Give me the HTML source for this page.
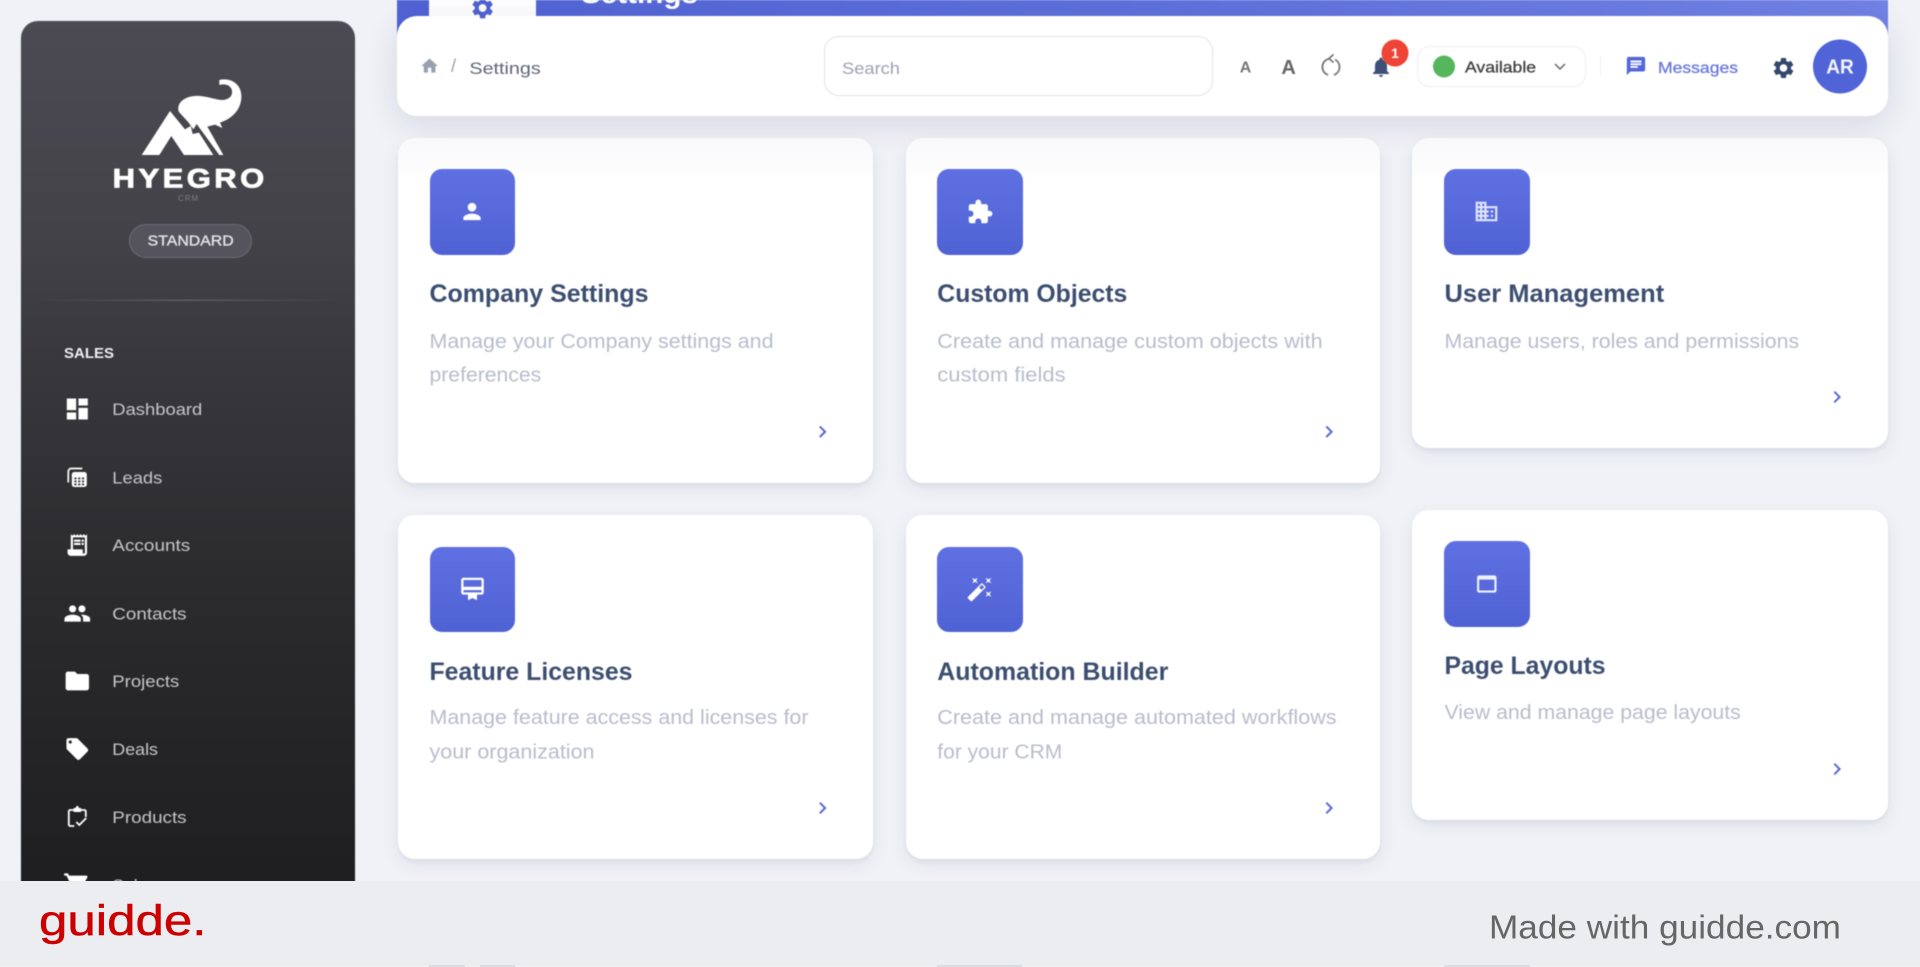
<!DOCTYPE html>
<html lang="en">
<head>
<meta charset="utf-8">
<title>Settings - Hyegro CRM</title>
<style>
html,body{margin:0;padding:0;width:1920px;height:966px;overflow:hidden;background:#f0f2f7;font-family:"Liberation Sans",sans-serif}
#stage{position:absolute;left:0;top:0;width:1920px;height:966px;overflow:hidden;filter:blur(.45px)}
.box{position:absolute;box-sizing:border-box}
#side{left:21px;top:21px;width:334px;height:880px;border-radius:17px 17px 0 0;background:linear-gradient(180deg,#4c4b54 0,#434248 25%,#39383d 38%,#2c2c2f 62%,#1e1e20 100%);box-shadow:0 0 0 1px rgba(150,150,160,.08)}
#band{left:397px;top:0;width:1491px;height:40px;background:linear-gradient(90deg,#5164d4 0,#5f71dc 50%,#7282e5 100%)}
#tab{left:429px;top:0;width:107px;height:20px;background:#fff}
#bar{left:397px;top:16px;width:1491px;height:100px;background:#fff;border-radius:20px;box-shadow:0 8px 34px rgba(25,35,70,.12)}
#search{left:824px;top:36px;width:389px;height:60px;border:1.5px solid #e1e3e9;border-radius:15px;background:#fff}
#avail{left:1417px;top:46px;width:169px;height:41px;border:1.5px solid #eceef2;border-radius:13px;background:#fff}
.card{position:absolute;background:#fff;border-radius:17px;box-shadow:0 3px 5px rgba(30,40,80,.06),0 6px 20px rgba(30,40,80,.07)}
.r1{background:linear-gradient(180deg,#f9f9fb 0,#fdfdfe 32px,#fff 42px)}
.ic{position:absolute;width:85.5px;height:85.5px;border-radius:12px;background:linear-gradient(180deg,#5f70e2 0,#4f62d4 100%)}
#main{position:absolute;left:0;top:0}
#foot{position:absolute;left:0;top:881px;width:1920px;height:85px;background:#ecedf0}
#foot i{position:absolute;top:84px;height:2px;background:#dcdee6}
text{font-family:"Liberation Sans",sans-serif}
.t{font-size:25px;font-weight:700;fill:#3c4e70}
.d{font-size:20.5px;fill:#b9bccc}
.m{font-size:17px;fill:#c6c6c9}
</style>
</head>
<body>
<div id="stage">
  <div class="box" id="side"></div>
  <div class="box" id="band"></div>
  <div class="box" id="tab"></div>
  <div class="box" id="bar"></div>
  <div class="box" id="search"></div>
  <div class="box" id="avail"></div>

  <div class="card r1" style="left:397.5px;top:137.5px;width:475.5px;height:345px"></div>
  <div class="card r1" style="left:905.5px;top:137.5px;width:474.5px;height:345px"></div>
  <div class="card r1" style="left:1412px;top:137.5px;width:476px;height:310.5px"></div>
  <div class="card" style="left:397.5px;top:514.5px;width:475.5px;height:344px"></div>
  <div class="card" style="left:905.5px;top:514.5px;width:474.5px;height:344px"></div>
  <div class="card" style="left:1412px;top:509.5px;width:476px;height:310.5px"></div>

  <div class="ic" style="left:429.5px;top:169px"></div>
  <div class="ic" style="left:937.3px;top:169px"></div>
  <div class="ic" style="left:1444px;top:169px"></div>
  <div class="ic" style="left:429.5px;top:546.5px"></div>
  <div class="ic" style="left:937.3px;top:546.5px"></div>
  <div class="ic" style="left:1444px;top:541px"></div>

  <svg id="main" width="1920" height="966" viewBox="0 0 1920 966" xmlns="http://www.w3.org/2000/svg">
    <!-- Logo -->
    <g transform="scale(.33333)" fill="#fff">
      <path d="M536 335C528 305 560 285 600 288C625 290 650 300 668 300C690 298 700 285 695 268C690 255 675 250 658 255L658 240C690 232 722 250 724 285C726 325 700 355 660 368L667 384L645 374L622 380L670 465L658 465L590 372L580 388L566 368Z"/>
      <path d="M510 333L425 465H478L514 408L552 465H640L597 398L578 402L572 378L555 388Z"/>
    </g>
    <text x="112.7" y="187.5" font-size="27" font-weight="700" fill="#fff" stroke="#fff" stroke-width=".8" letter-spacing="3" textLength="155" lengthAdjust="spacingAndGlyphs">HYEGRO</text>
    <text x="178" y="201" font-size="8" fill="#7c7c82" letter-spacing="1" textLength="21" lengthAdjust="spacingAndGlyphs">CRM</text>
    <rect x="129.5" y="224.5" width="122" height="33" rx="16.5" fill="#55545c" stroke="#6c6b73"/>
    <text x="147.7" y="245.5" font-size="15" fill="#e8e8ea" stroke="#e8e8ea" stroke-width=".3" textLength="86" lengthAdjust="spacingAndGlyphs">STANDARD</text>
    <defs><linearGradient id="dv"><stop offset="0" stop-color="#5c5b61" stop-opacity="0"/><stop offset=".5" stop-color="#5f5e64"/><stop offset="1" stop-color="#5c5b61" stop-opacity="0"/></linearGradient></defs>
    <rect x="35" y="299.5" width="306" height="1.5" fill="url(#dv)"/>

    <!-- Sidebar -->
    <text x="64" y="358" font-size="14.5" font-weight="700" fill="#eeeeef" textLength="50" lengthAdjust="spacingAndGlyphs">SALES</text>

    <svg x="63.3" y="395" width="28" height="28" viewBox="0 0 24 24" fill="#fff"><path d="M3 13h8V3H3v10zm0 8h8v-6H3v6zm10 0h8V11h-8v10zm0-18v6h8V3h-8z"/></svg>
    <text class="m" x="112.3" y="415" textLength="90" lengthAdjust="spacingAndGlyphs">Dashboard</text>

    <svg x="65.3" y="465.5" width="24" height="24" viewBox="0 0 24 24">
      <path d="M3 17V6a3 3 0 0 1 3-3h11" fill="none" stroke="#fff" stroke-width="1.7"/>
      <rect x="6.5" y="6.5" width="15" height="15" rx="2.5" fill="#fff"/>
      <g fill="#37363b"><rect x="9" y="12" width="2.2" height="1.8"/><rect x="12.8" y="12" width="2.2" height="1.8"/><rect x="16.6" y="12" width="2.2" height="1.8"/><rect x="9" y="15" width="2.2" height="1.8"/><rect x="12.8" y="15" width="2.2" height="1.8"/><rect x="16.6" y="15" width="2.2" height="1.8"/><rect x="9" y="18" width="2.2" height="1.8"/><rect x="12.8" y="18" width="2.2" height="1.8"/><rect x="16.6" y="18" width="2.2" height="1.8"/></g>
    </svg>
    <text class="m" x="112.3" y="483.5" textLength="50" lengthAdjust="spacingAndGlyphs">Leads</text>

    <svg x="64.3" y="532" width="26" height="26" viewBox="0 0 24 24" fill="#fff"><path d="M19.5 3.5 18 2l-1.500 1.500L15 2l-1.500 1.500L12 2l-1.500 1.500L9 2 7.500 3.500 6 2v14H3v3c0 1.660 1.340 3 3 3h12c1.660 0 3-1.340 3-3V2l-1.500 1.500zM19 19c0 .55-.45 1-1 1s-1-.45-1-1v-3H8V5h11v14zM9 7h6v2H9zM16 7h2v2h-2zM9 10h6v2H9zM16 10h2v2h-2z"/></svg>
    <text class="m" x="112.3" y="551" textLength="78" lengthAdjust="spacingAndGlyphs">Accounts</text>

    <svg x="63.3" y="599.5" width="28" height="28" viewBox="0 0 24 24" fill="#fff"><path d="M16 11c1.660 0 2.990-1.340 2.990-3S17.660 5 16 5c-1.660 0-3 1.340-3 3s1.340 3 3 3zm-8 0c1.660 0 2.990-1.340 2.990-3S9.660 5 8 5C6.340 5 5 6.340 5 8s1.340 3 3 3zm0 2c-2.330 0-7 1.170-7 3.500V19h14v-2.500c0-2.330-4.670-3.500-7-3.500zm8 0c-.29 0-.62.02-.97.05 1.160.84 1.970 1.970 1.970 3.450V19h6v-2.500c0-2.330-4.670-3.500-7-3.500z"/></svg>
    <text class="m" x="112.3" y="619.5" textLength="74.3" lengthAdjust="spacingAndGlyphs">Contacts</text>

    <svg x="63.3" y="667" width="28" height="28" viewBox="0 0 24 24" fill="#fff"><path d="M10 4H4c-1.100 0-1.990.9-1.990 2L2 18c0 1.100.9 2 2 2h16c1.100 0 2-.9 2-2V8c0-1.100-.9-2-2-2h-8l-2-2z"/></svg>
    <text class="m" x="112.3" y="687" textLength="67" lengthAdjust="spacingAndGlyphs">Projects</text>

    <svg x="64.3" y="736" width="26" height="26" viewBox="0 0 24 24" fill="#fff"><path d="M21.410 11.580l-9-9C12.050 2.220 11.550 2 11 2H4c-1.100 0-2 .9-2 2v7c0 .55.22 1.050.59 1.420l9 9c.36.36.86.58 1.410.58.55 0 1.050-.22 1.410-.59l7-7c.37-.36.59-.86.59-1.410 0-.55-.23-1.060-.59-1.420zM5.500 7C4.670 7 4 6.330 4 5.500S4.670 4 5.500 4 7 4.670 7 5.500 6.330 7 5.500 7z"/></svg>
    <text class="m" x="112.3" y="755" textLength="45.7" lengthAdjust="spacingAndGlyphs">Deals</text>

    <svg x="65.3" y="805" width="24" height="24" viewBox="0 0 24 24" fill="none" stroke="#fff" stroke-width="1.800">
      <path d="M8 5H5a1.500 1.500 0 0 0-1.500 1.500v13A1.500 1.500 0 0 0 5 21h4"/>
      <path d="M16 5h3a1.500 1.500 0 0 1 1.500 1.500V12"/>
      <rect x="8" y="3" width="8" height="4" rx="1" fill="#fff" stroke="none"/>
      <circle cx="12" cy="2.500" r="1.500" fill="#fff" stroke="none"/>
      <path d="M11 17l3 3 7-7"/>
    </svg>
    <text class="m" x="112.3" y="823" textLength="74.3" lengthAdjust="spacingAndGlyphs">Products</text>

    <svg x="63" y="871" width="28" height="28" viewBox="0 0 24 24" fill="#fff"><path d="M7 18c-1.100 0-1.990.9-1.990 2S5.900 22 7 22s2-.9 2-2-.9-2-2-2zM1 2v2h2l3.600 7.590-1.350 2.450c-.16.28-.25.61-.25.96 0 1.100.9 2 2 2h12v-2H7.420c-.14 0-.25-.11-.25-.25l.03-.12.9-1.630h7.450c.75 0 1.410-.41 1.750-1.030l3.580-6.490c.08-.14.12-.31.12-.48 0-.55-.45-1-1-1H5.210l-.94-2H1z"/></svg>
    <text class="m" x="112.3" y="891" textLength="44" lengthAdjust="spacingAndGlyphs">Sales</text>

    <!-- Header -->
    <svg x="469.600" y="-5" width="26" height="26" viewBox="0 0 24 24" fill="#4f60d0"><path d="M19.140 12.940c.04-.3.06-.61.06-.94 0-.32-.02-.64-.07-.94l2.030-1.580c.18-.14.23-.41.12-.61l-1.920-3.320c-.12-.22-.37-.29-.59-.22l-2.390.96c-.5-.38-1.030-.7-1.620-.94l-.36-2.540c-.04-.24-.24-.41-.48-.41h-3.840c-.24 0-.43.17-.47.41l-.36 2.540c-.59.24-1.130.57-1.620.94l-2.390-.96c-.22-.08-.47 0-.59.22L2.740 8.870c-.12.21-.08.47.12.61l2.030 1.580c-.05.3-.09.63-.09.94s.02.64.07.94l-2.030 1.580c-.18.14-.23.41-.12.61l1.920 3.320c.12.22.37.29.59.22l2.390-.96c.5.38 1.030.7 1.620.94l.36 2.540c.05.24.24.41.48.41h3.840c.24 0 .44-.17.47-.41l.36-2.540c.59-.24 1.130-.56 1.620-.94l2.390.96c.22.08.47 0 .59-.22l1.920-3.320c.12-.22.07-.47-.12-.61l-2.010-1.580zM12 15.600c-1.980 0-3.600-1.620-3.600-3.600s1.620-3.600 3.600-3.600 3.600 1.620 3.600 3.600-1.620 3.600-3.600 3.600z"/></svg>
    <text x="581" y="3" font-size="28" font-weight="700" fill="#fff" textLength="117" lengthAdjust="spacingAndGlyphs">Settings</text>

    <svg x="419.600" y="56" width="20" height="20" viewBox="0 0 24 24" fill="#98a0b0"><path d="M10 20v-6h4v6h5v-8h3L12 3 2 12h3v8z"/></svg>
    <text x="451" y="72" font-size="18" fill="#98a0b0">/</text>
    <text x="469.400" y="74" font-size="17" fill="#5e6678" textLength="71.400" lengthAdjust="spacingAndGlyphs">Settings</text>
    <text x="842" y="74" font-size="17" fill="#9ba1b2" textLength="58" lengthAdjust="spacingAndGlyphs">Search</text>

    <text x="1245.500" y="72.600" font-size="16" font-weight="700" fill="#777" text-anchor="middle">A</text>
    <text x="1288.600" y="74" font-size="20" font-weight="700" fill="#666" text-anchor="middle">A</text>
    <g fill="none" stroke="#777" stroke-width="1.800">
      <path d="M1335 59.500A8.500 8.500 0 0 1 1334 75"/>
      <path d="M1328 75A8.500 8.500 0 0 1 1329 58.700"/>
      <path d="M1333.500 54.500l-4.500 4 4.500 4" stroke-linejoin="round"/>
    </g>

    <svg x="1369" y="55" width="24" height="24" viewBox="0 0 24 24" fill="#3d5078"><path d="M12 22c1.100 0 2-.9 2-2h-4c0 1.100.89 2 2 2zm6-6v-5c0-3.070-1.640-5.640-4.500-6.320V4c0-.83-.67-1.500-1.500-1.500s-1.500.67-1.500 1.500v.68C7.630 5.360 6 7.920 6 11v5l-2 2v1h16v-1l-2-2z"/></svg>
    <circle cx="1395" cy="53" r="13.500" fill="#ee4436"/>
    <text x="1395" y="58" font-size="14" font-weight="700" fill="#fff" text-anchor="middle">1</text>

    <circle cx="1444" cy="66.500" r="11" fill="#56b65c"/>
    <text x="1465" y="72.500" font-size="16" fill="#444" stroke="#444" stroke-width=".35" textLength="71" lengthAdjust="spacingAndGlyphs">Available</text>
    <path d="M1555 64l5 5 5-5" fill="none" stroke="#666" stroke-width="1.500"/>
    <rect x="1600" y="56" width="1" height="20" fill="#eff0f3"/>

    <svg x="1625" y="55" width="22" height="22" viewBox="0 0 24 24" fill="#5466d8"><path d="M20 2H4c-1.100 0-1.990.9-1.990 2L2 22l4-4h14c1.100 0 2-.9 2-2V4c0-1.100-.9-2-2-2zM6 9h12v2H6V9zm8 5H6v-2h8v2zm4-6H6V6h12v2z"/></svg>
    <text x="1658" y="73" font-size="16" fill="#6b79d9" stroke="#6b79d9" stroke-width=".3" textLength="80" lengthAdjust="spacingAndGlyphs">Messages</text>

    <svg x="1771" y="55.500" width="25" height="25" viewBox="0 0 24 24" fill="#34486c"><path d="M19.140 12.940c.04-.3.06-.61.06-.94 0-.32-.02-.64-.07-.94l2.030-1.580c.18-.14.23-.41.12-.61l-1.920-3.320c-.12-.22-.37-.29-.59-.22l-2.390.96c-.5-.38-1.030-.7-1.620-.94l-.36-2.540c-.04-.24-.24-.41-.48-.41h-3.840c-.24 0-.43.17-.47.41l-.36 2.540c-.59.24-1.130.57-1.620.94l-2.390-.96c-.22-.08-.47 0-.59.22L2.740 8.870c-.12.21-.08.47.12.61l2.030 1.580c-.05.3-.09.63-.09.94s.02.64.07.94l-2.030 1.580c-.18.14-.23.41-.12.61l1.920 3.320c.12.22.37.29.59.22l2.390-.96c.5.38 1.030.7 1.620.94l.36 2.540c.05.24.24.41.48.41h3.840c.24 0 .44-.17.47-.41l.36-2.540c.59-.24 1.130-.56 1.620-.94l2.390.96c.22.08.47 0 .59-.22l1.920-3.320c.12-.22.07-.47-.12-.61l-2.010-1.580zM12 15.600c-1.980 0-3.600-1.620-3.600-3.600s1.620-3.600 3.600-3.600 3.600 1.620 3.600 3.600-1.620 3.600-3.600 3.600z"/></svg>
    <circle cx="1840" cy="66.500" r="27" fill="#5064d8"/>
    <text x="1840" y="73.500" font-size="20" font-weight="700" fill="#f4f5fc" text-anchor="middle" textLength="27.500" lengthAdjust="spacingAndGlyphs">AR</text>

    <!-- Card icons -->
    <svg x="459" y="198.500" width="26" height="26" viewBox="0 0 24 24" fill="#fff"><path d="M12 12c2.210 0 4-1.790 4-4s-1.790-4-4-4-4 1.790-4 4 1.790 4 4 4zm0 2c-2.670 0-8 1.340-8 4v2h16v-2c0-2.660-5.330-4-8-4z"/></svg>
    <svg x="966.500" y="198.500" width="27" height="27" viewBox="0 0 24 24" fill="#fff"><path d="M20.500 11H19V7c0-1.100-.9-2-2-2h-4V3.500C13 2.120 11.880 1 10.500 1S8 2.120 8 3.500V5H4c-1.100 0-1.990.9-1.990 2v3.800H3.500c1.490 0 2.700 1.210 2.700 2.700s-1.210 2.700-2.700 2.700H2V20c0 1.100.9 2 2 2h3.800v-1.500c0-1.490 1.210-2.700 2.700-2.700 1.490 0 2.700 1.210 2.700 2.700V22H17c1.100 0 2-.9 2-2v-4h1.500c1.380 0 2.500-1.120 2.500-2.500S21.880 11 20.500 11z"/></svg>
    <svg x="1473.500" y="198.500" width="26" height="26" viewBox="0 0 24 24" fill="#dfe3fa"><path d="M12 7V3H2v18h20V7H12zM6 19H4v-2h2v2zm0-4H4v-2h2v2zm0-4H4V9h2v2zm0-4H4V5h2v2zm4 12H8v-2h2v2zm0-4H8v-2h2v2zm0-4H8V9h2v2zm0-4H8V5h2v2zm10 12h-8v-2h2v-2h-2v-2h2v-2h-2V9h8v10zm-2-8h-2v2h2v-2zm0 4h-2v2h2v-2z"/></svg>
    <svg x="459" y="575.500" width="27" height="27" viewBox="0 0 24 24" fill="#fff"><path d="M20 2H4c-1.110 0-2 .89-2 2v11c0 1.110.89 2 2 2h4v5l4-2 4 2v-5h4c1.110 0 2-.89 2-2V4c0-1.110-.89-2-2-2zm0 13H4v-2h16v2zm0-5H4V4h16v6z"/></svg>
    <svg x="966.500" y="575.500" width="27" height="27" viewBox="0 0 24 24" fill="#fff"><path d="M7.500 5.600 10 7 8.600 4.500 10 2 7.500 3.400 5 2l1.400 2.500L5 7zm12 9.800L17 14l1.400 2.500L17 19l2.500-1.400L22 19l-1.400-2.500L22 14zM22 2l-2.500 1.400L17 2l1.400 2.500L17 7l2.500-1.400L22 7l-1.400-2.500zm-7.630 5.290a.9959.9959 0 0 0-1.410 0L1.290 18.960c-.39.39-.39 1.020 0 1.410l2.340 2.340c.39.39 1.020.39 1.410 0L16.700 11.050c.39-.39.39-1.020 0-1.410l-2.330-2.350zm-1.030 5.490-2.120-2.120 2.440-2.440 2.120 2.120-2.440 2.440z"/></svg>
    <svg x="1473.800" y="571" width="26" height="26" viewBox="0 0 24 24" fill="#eef0fc"><path d="M19 4H5c-1.110 0-2 .9-2 2v12c0 1.100.89 2 2 2h14c1.100 0 2-.89 2-2V6c0-1.100-.89-2-2-2zm0 14H5V8h14v10z"/></svg>

    <!-- Card text -->
    <text class="t" x="429.500" y="302" textLength="219" lengthAdjust="spacingAndGlyphs">Company Settings</text>
    <text class="d" x="429.500" y="348" textLength="344" lengthAdjust="spacingAndGlyphs">Manage your Company settings and</text>
    <text class="d" x="429.500" y="381.700" textLength="111.700" lengthAdjust="spacingAndGlyphs">preferences</text>

    <text class="t" x="937.300" y="302" textLength="190" lengthAdjust="spacingAndGlyphs">Custom Objects</text>
    <text class="d" x="937.300" y="348" textLength="385.300" lengthAdjust="spacingAndGlyphs">Create and manage custom objects with</text>
    <text class="d" x="937.300" y="381.700" textLength="128.300" lengthAdjust="spacingAndGlyphs">custom fields</text>

    <text class="t" x="1444.500" y="302" textLength="219.700" lengthAdjust="spacingAndGlyphs">User Management</text>
    <text class="d" x="1444.500" y="348" textLength="354.700" lengthAdjust="spacingAndGlyphs">Manage users, roles and permissions</text>

    <text class="t" x="429.500" y="680" textLength="203" lengthAdjust="spacingAndGlyphs">Feature Licenses</text>
    <text class="d" x="429.500" y="724" textLength="379" lengthAdjust="spacingAndGlyphs">Manage feature access and licenses for</text>
    <text class="d" x="429.500" y="758.300" textLength="165" lengthAdjust="spacingAndGlyphs">your organization</text>

    <text class="t" x="937.300" y="680" textLength="231" lengthAdjust="spacingAndGlyphs">Automation Builder</text>
    <text class="d" x="937.300" y="724" textLength="399.300" lengthAdjust="spacingAndGlyphs">Create and manage automated workflows</text>
    <text class="d" x="937.300" y="758.300" textLength="125" lengthAdjust="spacingAndGlyphs">for your CRM</text>

    <text class="t" x="1444.500" y="674" textLength="161" lengthAdjust="spacingAndGlyphs">Page Layouts</text>
    <text class="d" x="1444.500" y="719" textLength="296.300" lengthAdjust="spacingAndGlyphs">View and manage page layouts</text>

    <!-- Chevrons -->
    <svg x="810.500" y="419.700" width="24" height="24" viewBox="0 0 24 24" fill="#5a68d0"><path d="M8.590 16.590 13.170 12 8.590 7.410 10 6l6 6-6 6z"/></svg>
    <svg x="1317" y="419.700" width="24" height="24" viewBox="0 0 24 24" fill="#5a68d0"><path d="M8.590 16.590 13.170 12 8.590 7.410 10 6l6 6-6 6z"/></svg>
    <svg x="1825" y="385" width="24" height="24" viewBox="0 0 24 24" fill="#5a68d0"><path d="M8.590 16.590 13.170 12 8.590 7.410 10 6l6 6-6 6z"/></svg>
    <svg x="810.500" y="796" width="24" height="24" viewBox="0 0 24 24" fill="#5a68d0"><path d="M8.590 16.590 13.170 12 8.590 7.410 10 6l6 6-6 6z"/></svg>
    <svg x="1317" y="796" width="24" height="24" viewBox="0 0 24 24" fill="#5a68d0"><path d="M8.590 16.590 13.170 12 8.590 7.410 10 6l6 6-6 6z"/></svg>
    <svg x="1825" y="757" width="24" height="24" viewBox="0 0 24 24" fill="#5a68d0"><path d="M8.590 16.590 13.170 12 8.590 7.410 10 6l6 6-6 6z"/></svg>
  </svg>
</div>

<div id="foot">
  <i style="left:429px;width:36px"></i><i style="left:480px;width:35px"></i>
  <i style="left:937px;width:85px"></i>
  <i style="left:1444px;width:86px"></i>
  <svg width="1920" height="85" viewBox="0 881 1920 85" style="position:absolute;left:0;top:0" xmlns="http://www.w3.org/2000/svg">
    <text x="39" y="935" font-size="43" fill="#cc0000" stroke="#cc0000" stroke-width=".5" textLength="167.500" lengthAdjust="spacingAndGlyphs">guidde.</text>
    <text x="1489" y="938.300" font-size="33" fill="#666" textLength="352" lengthAdjust="spacingAndGlyphs">Made with guidde.com</text>
  </svg>
</div>
</body>
</html>
